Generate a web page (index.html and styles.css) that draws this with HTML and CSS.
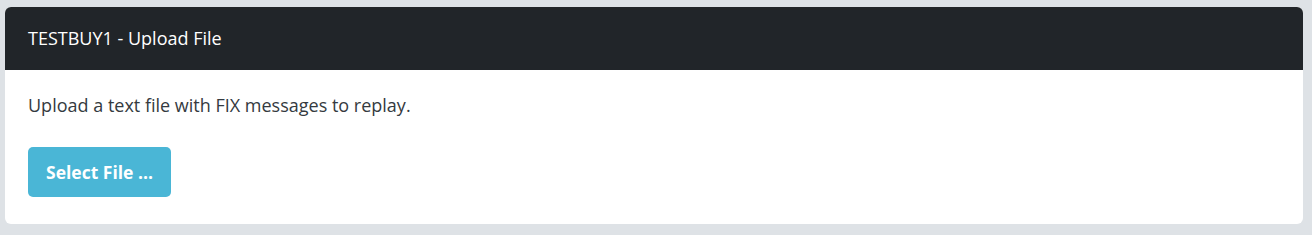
FILE: index.html
```html
<!DOCTYPE html>
<html>
<head>
<meta charset="utf-8">
<link rel="stylesheet" href="styles.css">
</head>
<body>
<div class="card">
  <div class="card-header">TESTBUY1 - Upload File</div>
  <div class="card-body">
    <p class="intro">Upload a text file with FIX messages to replay.</p>
    <button class="btn-info">Select File ...</button>
  </div>
</div>
</body>
</html>
```
FILE: styles.css
```css
html, body {
  margin: 0;
  padding: 0;
  background: #dee2e6;
  font-family: "Open Sans", "Liberation Sans", sans-serif;
}
body {
  padding: 7px 9px 11px 5px;
}
.card {
  background: #ffffff;
  border-radius: 6px;
  overflow: hidden;
}
.card-header {
  background: #212529;
  color: #ffffff;
  font-size: 18px;
  line-height: 27px;
  padding: 18px 23px;
}
.card-body {
  padding: 22px 23px 27px;
}
.intro {
  margin: 0 0 28px;
  font-size: 18px;
  line-height: 27px;
  color: #343a40;
}
.btn-info {
  display: block;
  background: #4ab6d6;
  color: #ffffff;
  border: none;
  border-radius: 5px;
  font-family: "Open Sans", "Liberation Sans", sans-serif;
  font-weight: 700;
  font-size: 17.5px;
  line-height: 24px;
  padding: 13px 18px;
  cursor: pointer;
}
```
